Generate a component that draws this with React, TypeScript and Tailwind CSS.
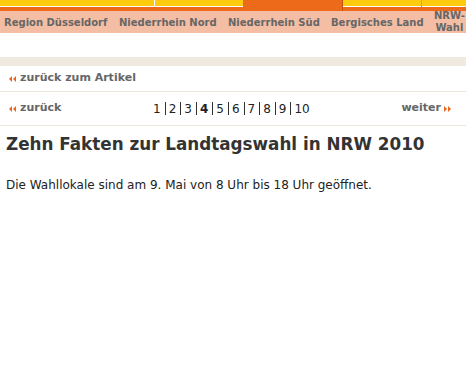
import React from "react";

const ArrowsLeft = () => (
  <svg width="8" height="6" viewBox="0 0 8 6" className="shrink-0">
    <polygon points="3,0 3,6 0,3" fill="#e8671c" />
    <polygon points="7,0 7,6 4,3" fill="#e8671c" />
  </svg>
);

const ArrowsRight = () => (
  <svg width="8" height="6" viewBox="0 0 8 6" className="shrink-0">
    <polygon points="0,0 0,6 3,3" fill="#e8671c" />
    <polygon points="4,0 4,6 7,3" fill="#e8671c" />
  </svg>
);

export default function App() {
  const pages = ["1", "2", "3", "4", "5", "6", "7", "8", "9", "10"];
  return (
    <div className="w-[466px] h-[376px] bg-white overflow-hidden font-['DejaVu_Sans',Verdana,sans-serif]">
      {/* top color strip */}
      <div className="flex h-[11px] bg-[#ee6a1b]">
        <div className="w-[154px] h-[6px] bg-[#fecb0e] border-b border-white box-content" />
        <div className="w-px h-[7px] bg-white" />
        <div className="w-[88px] h-[6px] bg-[#fecb0e] border-b border-white box-content" />
        <div className="w-[99px]" />
        <div className="w-px h-[11px] bg-[#c4520f]" />
        <div className="w-[78px] h-[6px] bg-[#fecb0e] border-b border-white box-content" />
        <div className="w-px h-[6px] bg-[#e0b000]" />
        <div className="flex-1 h-[6px] bg-[#fecb0e] border-b border-white box-content" />
      </div>
      {/* nav bar */}
      <div className="h-[22px] bg-[#f3bea4] flex items-center pl-[4px] text-[10px] font-bold text-[#666] leading-none whitespace-nowrap overflow-hidden">
        <span className="w-[115px] shrink-0 pt-[2px]">Region Düsseldorf</span>
        <span className="w-[109px] shrink-0 pt-[2px]">Niederrhein Nord</span>
        <span className="w-[103px] shrink-0 pt-[2px]">Niederrhein Süd</span>
        <span className="w-[103px] shrink-0 pt-[2px]">Bergisches Land</span>
        <span className="shrink-0 text-center leading-[12px]">
          NRW-
          <br />
          Wahl
        </span>
      </div>
      <div className="h-[24px]" />
      <div className="h-[9px] bg-[#f0e9df]" />
      {/* back to article */}
      <div className="h-[26px] flex items-center pl-[9px] gap-[3px] border-b border-[#ece5da] text-[11px] font-bold text-[#666]">
        <ArrowsLeft />
        <span>zurück zum Artikel</span>
      </div>
      {/* pagination */}
      <div className="h-[34px] flex items-center border-b border-[#ece5da] relative">
        <div className="flex items-center pl-[9px] gap-[3px] w-[150px] text-[11px] font-bold text-[#666]">
          <ArrowsLeft />
          <span>zurück</span>
        </div>
        <div className="flex items-center text-[12px] text-[#222] ml-[3px]">
          {pages.map((p, i) => (
            <React.Fragment key={p}>
              {i > 0 && <span className="w-px h-[13px] bg-[#333] ml-[4px] mr-[3px]" />}
              <span className={p === "4" ? "font-bold" : ""}>{p}</span>
            </React.Fragment>
          ))}
        </div>
        <div className="ml-auto mr-[14px] flex items-center gap-[3px] text-[11px] font-bold text-[#666]">
          <span>weiter</span>
          <ArrowsRight />
        </div>
      </div>
      {/* content */}
      <h1 className="mt-[7px] ml-[6px] text-[16.8px] font-bold text-[#333] leading-[22px]">
        Zehn Fakten zur Landtagswahl in NRW 2010
      </h1>
      <p className="mt-[22px] ml-[6px] text-[12px] text-[#222] leading-[16px]">
        Die Wahllokale sind am 9. Mai von 8 Uhr bis 18 Uhr geöffnet.
      </p>
    </div>
  );
}
